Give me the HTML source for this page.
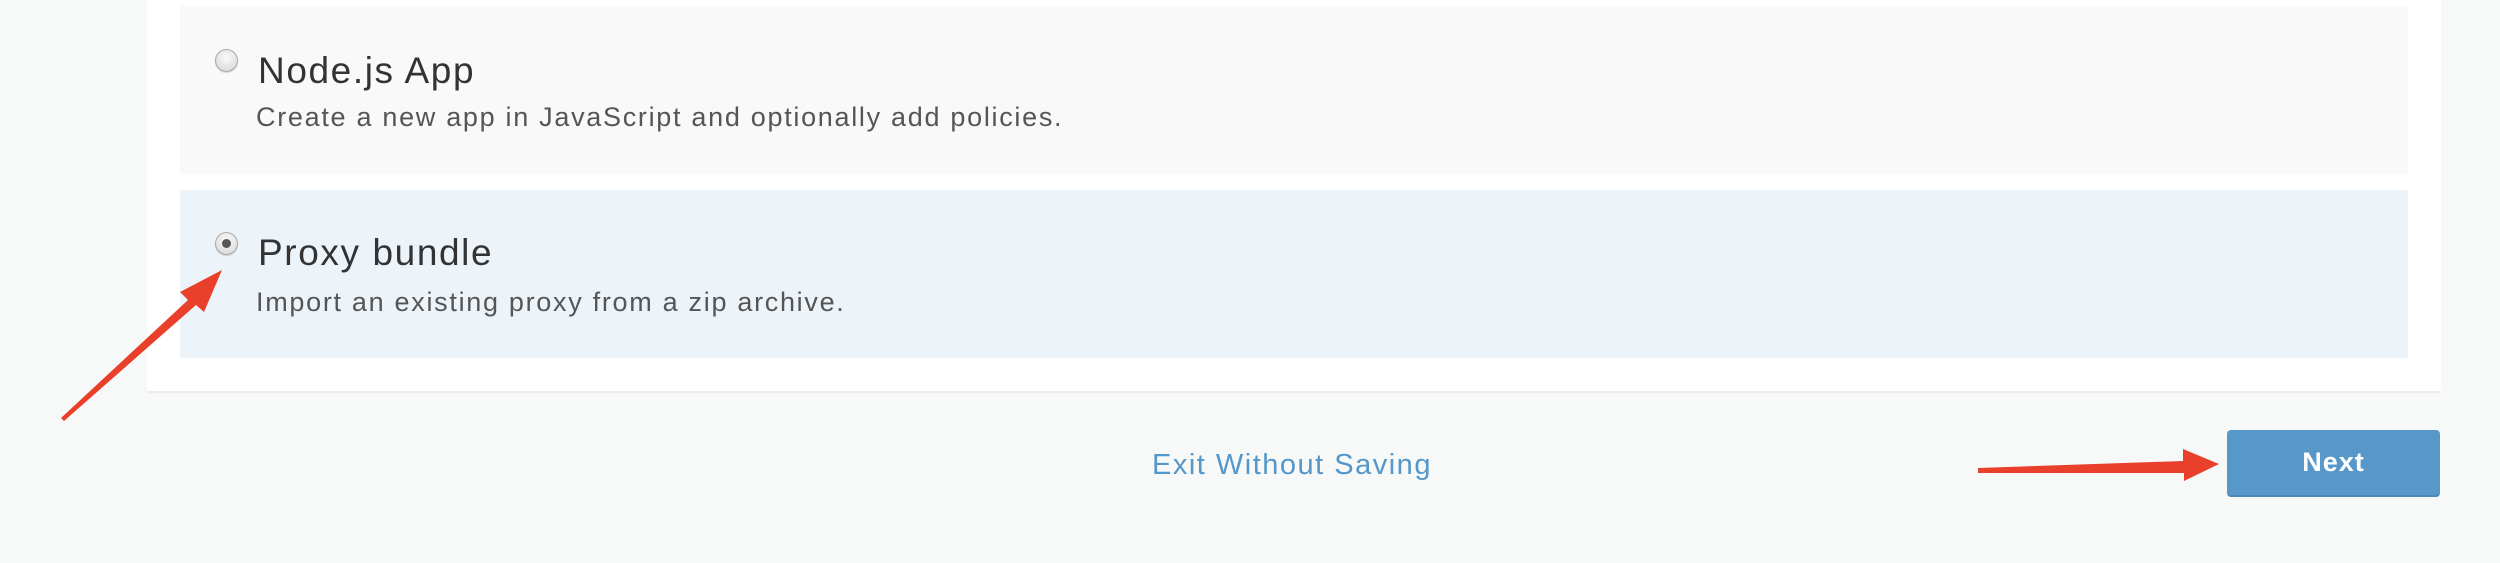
<!DOCTYPE html>
<html><head><meta charset="utf-8"><style>
*{margin:0;padding:0;box-sizing:border-box}
body{width:2500px;height:563px;background:#f7f8f8;position:relative;overflow:hidden;font-family:"Liberation Sans",sans-serif}
.panel{position:absolute;left:147px;top:0;width:2294px;height:393px;background:#fff;border-bottom:2px solid #ececec}
.card{position:absolute;left:180px;width:2228px;height:168px}
.c1{top:6px;background:#f9f9f9}
.c2{top:190px;background:#ecf4fa}
.radio{position:absolute;left:215px;width:23px;height:23px;border-radius:50%;border:1px solid #aaa;background:radial-gradient(circle at 50% 35%,#fafafa,#d4d4d4);box-shadow:0 1px 1px rgba(0,0,0,.15)}
.radio.on::after{content:"";position:absolute;left:6px;top:6px;width:9px;height:9px;border-radius:50%;background:#555}
.t{position:absolute;left:258px;font-size:37px;color:#333;line-height:1;white-space:nowrap;letter-spacing:1.6px}
.d{position:absolute;left:256px;font-size:27px;color:#555;line-height:1;white-space:nowrap;letter-spacing:1.7px}
.exit{position:absolute;left:1152px;top:449px;font-size:29px;color:#5597c9;white-space:nowrap;letter-spacing:1.5px}
.btn{position:absolute;left:2227px;top:430px;width:213px;height:67px;background:#5898c9;border-radius:4px;border-bottom:2px solid #4c88b8;color:#fff;font-weight:bold;font-size:27px;text-align:center;line-height:65px;letter-spacing:1px}
svg{position:absolute;left:0;top:0}
</style></head><body>
<div class="panel"></div>
<div class="card c1"></div>
<div class="card c2"></div>
<div class="radio" style="top:49px"></div>
<div class="t" style="top:52px">Node.js App</div>
<div class="d" style="top:104px">Create a new app in JavaScript and optionally add policies.</div>
<div class="radio on" style="top:232px"></div>
<div class="t" style="top:234px">Proxy bundle</div>
<div class="d" style="top:289px">Import an existing proxy from a zip archive.</div>
<div class="exit">Exit Without Saving</div>
<div class="btn">Next</div>
<svg width="2500" height="563">
<g fill="#e8402a" stroke="none">
<path d="M61 418 L188 300 L180 292 L222 270 L204 312 L196 305 L64 421 Z"/>
<path d="M1978 468 L2183 461 L2183 449 L2219 464 L2184 481 L2184 473 L1978 473 Z"/>
</g>
</svg>
</body></html>
